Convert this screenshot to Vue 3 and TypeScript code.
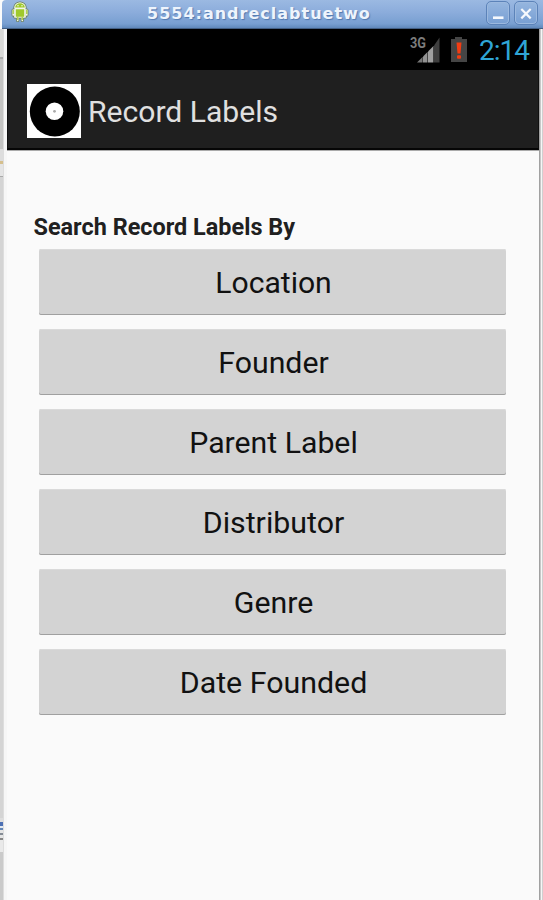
<script setup lang="ts">
interface SearchOption {
  label: string
  width: number
}

const options: SearchOption[] = [
  { label: 'Location', width: 115 },
  { label: 'Founder', width: 109 },
  { label: 'Parent Label', width: 167 },
  { label: 'Distributor', width: 140 },
  { label: 'Genre', width: 78 },
  { label: 'Date Founded', width: 186 },
]
</script>

<template>
  <div class="window">
    <header class="titlebar">
      <svg class="android" viewBox="0 0 18 22" width="18" height="22">
        <g stroke="#647a52" stroke-width="3.2" fill="#647a52" stroke-linecap="round" stroke-linejoin="round">
          <path d="M4 6.5a5 4.5 0 0 1 10 0zM4 8h10v8H4zM2.2 9v5M15.8 9v5M6.7 16v3.5M11.3 16v3.5" />
        </g>
        <g stroke="#f2f7e8" stroke-width="1.7" fill="#f2f7e8" stroke-linecap="round" stroke-linejoin="round">
          <path d="M4 6.5a5 4.5 0 0 1 10 0zM4 8h10v8H4zM2.2 9v5M15.8 9v5M6.7 16v3.5M11.3 16v3.5" />
        </g>
        <path d="M4.2 6.5a4.8 4.2 0 0 1 9.6 0zM4.8 8.2h8.4v7.6H4.8z" fill="#9fc92c" />
        <path d="M2.2 9v4M15.8 9v4M6.8 15.5v3.500M11.2 15.5v3.500" stroke="#a5cb3c" stroke-width="1.3" />
        <circle cx="7" cy="4.8" r=".7" fill="#fff" />
        <circle cx="11" cy="4.8" r=".7" fill="#fff" />
      </svg>
      <h1 class="window-title">5554:andreclabtuetwo</h1>
      <div class="controls">
        <button class="control" aria-label="Minimize">
          <svg viewBox="0 0 22 22" width="22" height="22"><path d="M6 15.7h10.5" stroke="#f6f9fd" stroke-width="2.6" /></svg>
        </button>
        <button class="control" aria-label="Close">
          <svg viewBox="0 0 22 22" width="22" height="22"><path d="M6.3 7l9.4 9.4M15.7 7l-9.4 9.4" stroke="#f6f9fd" stroke-width="2.2" /></svg>
        </button>
      </div>
    </header>

    <div class="body">
      <div class="edge-left">
        <i class="seg seg-top"></i>
        <i class="seg seg-gray"></i>
        <i class="seg seg-light"></i>
        <i class="seg seg-long"></i>
        <i class="seg seg-marks"></i>
        <i class="seg seg-end"></i>
      </div>
      <main class="screen">
        <div class="statusbar">
          <svg class="signal" viewBox="0 0 32 30" width="32" height="30">
            <text x="1" y="14" textLength="16" lengthAdjust="spacingAndGlyphs" class="network">3G</text>
            <path d="M8 28.500l5-5v5z" fill="#777" />
            <path d="M14 28.500v-6l4-4v10z" fill="#929292" />
            <path d="M19 28.500v-11l5-5v16z" fill="#a0a0a0" />
            <path d="M25 28.500v-17l5.500-8v25z" fill="#3f3f3f" />
            <path d="M13.500 23v5.500M18.500 18v10.500M24.500 12v16.500" stroke="#444" />
          </svg>
          <svg class="battery" viewBox="0 0 18 26" width="18" height="26">
            <path d="M1 3h4V1h7v2h5v23H1z" fill="#454545" />
            <path d="M6.500 6.500h5l-1 11h-3z" fill="#f23c12" />
            <rect x="7" y="19.300" width="4" height="3.500" rx="1" fill="#f23c12" />
          </svg>
          <svg class="clock" width="52" height="34" viewBox="0 0 52 34">
            <text x="1" y="26" textLength="51">2:14</text>
          </svg>
        </div>
        <div class="actionbar">
          <svg class="vinyl" viewBox="0 0 54 54" width="54" height="54">
            <rect width="54" height="54" fill="#fff" />
            <circle cx="27.800" cy="27.500" r="25" fill="#000" />
            <circle cx="27.500" cy="27.300" r="8.800" fill="#fff" />
            <circle cx="27.500" cy="27.300" r="1.400" fill="#aaa" />
          </svg>
          <svg class="app-title" width="196" height="44" viewBox="0 0 196 44">
            <text x="0" y="33" textLength="190" lengthAdjust="spacingAndGlyphs">Record Labels</text>
          </svg>
        </div>
        <section class="content">
          <svg class="heading" width="270" height="34" viewBox="0 0 270 34">
            <text x="0.5" y="26" textLength="261.5" lengthAdjust="spacingAndGlyphs">Search Record Labels By</text>
          </svg>
          <div class="options">
            <button v-for="option in options" :key="option.label" class="option">
              <svg width="466" height="66" viewBox="0 0 466 66">
                <text x="234.500" y="44" text-anchor="middle" :textLength="option.width + 1.500" lengthAdjust="spacingAndGlyphs">{{ option.label }}</text>
              </svg>
            </button>
          </div>
        </section>
      </main>
      <div class="edge-right"></div>
    </div>
  </div>
</template>

<style>
body {
  margin: 0;
  overflow: hidden;
}
</style>

<style scoped>
.window {
  width: 543px;
  height: 900px;
  display: flex;
  flex-direction: column;
  background: #fbfbfb;
  font-family: Roboto, "Liberation Sans", sans-serif;
}
svg {
  display: block;
  flex: none;
}
button {
  padding: 0;
  border: 0;
}
.titlebar {
  box-sizing: border-box;
  height: 29px;
  flex: none;
  display: flex;
  align-items: flex-start;
  margin-left: 2px;
  padding: 1px 5px 0 9px;
  border-radius: 4px 0 0 0;
  border-bottom: 1px solid #435f84;
  background: linear-gradient(#9bb9e2, #8bacdb 45%, #789fd1 85%, #6088bb);
}
.window-title {
  flex: 1;
  margin: 0 0 0 118px;
  font: bold 16px/26px "DejaVu Sans", sans-serif;
  letter-spacing: 1px;
  color: #eef4fc;
  text-shadow: 1px 1px 1px #5279b0;
  white-space: nowrap;
}
.controls {
  display: flex;
  gap: 4px;
}
.control {
  box-sizing: border-box;
  width: 24px;
  height: 24px;
  border: 1px solid #5c83b9;
  border-radius: 5px;
  background: linear-gradient(#96b6df, #789fd3);
  box-shadow: inset 0 0 0 1px #9cb9df;
}
.body {
  flex: 1;
  min-height: 0;
  display: grid;
  grid-template-columns: 7px 532px 4px;
}
.edge-left {
  display: flex;
  flex-direction: column;
  background: linear-gradient(90deg, #ddd 0 2px, #c7c7c7 2px 3px, #ddd 3px 4px, #f6f6f6 4px);
}
.seg {
  width: 3px;
}
.seg-top { height: 28px; background: #d9d9d7; }
.seg-gray { height: 90px; background: #c4c4c3; border-top: 2px solid #aaa; }
.seg-light { height: 28px; background: linear-gradient(#ddd 0 12px, #d5bf8d 12px 15px, #e5e5e5 15px 27px, #aaa 27px); }
.seg-long { height: 641px; background: #d4d4d4; }
.seg-marks { height: 34px; background: linear-gradient(#ddd 0 4px, #4c70b4 4px 8px, #e1e8f0 8px 10px, #6386b5 10px 12px, #e5e5e5 12px 15px, #848b94 15px 17px, #e5e5e5 17px 20px, #878787 20px 22px, #e9e9e9 22px); }
.seg-end { flex: 1; background: #cacaca; }
.screen {
  display: flex;
  flex-direction: column;
  background: #fafafa;
}
.edge-right {
  background: linear-gradient(90deg, #a1a1a1 0 1px, #c8c8c8 1px 2px, #f6f6f6 2px 3px, #d0d0d0 3px);
}
.statusbar {
  height: 41px;
  flex: none;
  display: flex;
  align-items: flex-start;
  justify-content: flex-end;
  box-sizing: border-box;
  padding: 5px 9px 0 0;
  background: #000;
}
.network {
  font: bold 14px Roboto, sans-serif;
  fill: #7c7c7c;
}
.battery {
  margin: 2px 10px 0 9px;
}
.clock {
  font-size: 28px;
  fill: #2fa5d6;
}
.actionbar {
  box-sizing: border-box;
  height: 80px;
  flex: none;
  display: flex;
  align-items: flex-start;
  padding: 14px 0 0 20px;
  background: #1f1f1f;
  border-left: 1px solid #101010;
  border-right: 1px solid #101010;
  border-bottom: 2px solid #060606;
  box-shadow: 0 1px 0 #aaa;
}
.vinyl {
  margin-left: -1px;
}
.app-title {
  margin: 5px 0 0 7px;
  font-size: 30px;
  fill: #e0e0e0;
}
.content {
  padding: 59px 33px 0 26px;
}
.heading {
  font-size: 23px;
  font-weight: bold;
  fill: #202020;
}
.options {
  display: flex;
  flex-direction: column;
  gap: 14px;
  margin: 6px 0 0 6px;
}
.option {
  width: 467px;
  height: 66px;
  border-radius: 2px;
  background: #d3d3d3;
  box-shadow: inset 0 -1px 0 #a0a0a0, inset 0 1px 0 #dadada;
  font: 30px Roboto, sans-serif;
  color: #111;
}
.option text {
  fill: #111;
}
</style>
